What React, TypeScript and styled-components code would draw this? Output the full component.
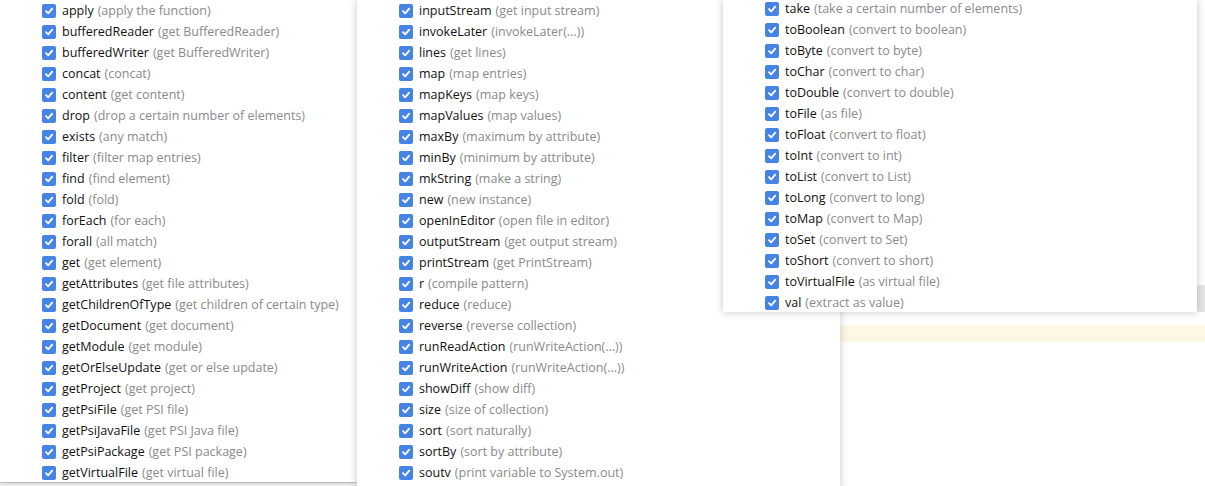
import styled, { createGlobalStyle } from "styled-components";

const GlobalStyle = createGlobalStyle`
  html, body {
    margin: 0;
    padding: 0;
    background: #ffffff;
    overflow: hidden;
  }
  body {
    font-family: "Open Sans", "Noto Sans", sans-serif;
  }
`;

type Item = [string, string];

const left: Item[] = [
  ["apply", "apply the function"],
  ["bufferedReader", "get BufferedReader"],
  ["bufferedWriter", "get BufferedWriter"],
  ["concat", "concat"],
  ["content", "get content"],
  ["drop", "drop a certain number of elements"],
  ["exists", "any match"],
  ["filter", "filter map entries"],
  ["find", "find element"],
  ["fold", "fold"],
  ["forEach", "for each"],
  ["forall", "all match"],
  ["get", "get element"],
  ["getAttributes", "get file attributes"],
  ["getChildrenOfType", "get children of certain type"],
  ["getDocument", "get document"],
  ["getModule", "get module"],
  ["getOrElseUpdate", "get or else update"],
  ["getProject", "get project"],
  ["getPsiFile", "get PSI file"],
  ["getPsiJavaFile", "get PSI Java file"],
  ["getPsiPackage", "get PSI package"],
  ["getVirtualFile", "get virtual file"],
];

const middle: Item[] = [
  ["inputStream", "get input stream"],
  ["invokeLater", "invokeLater(...)"],
  ["lines", "get lines"],
  ["map", "map entries"],
  ["mapKeys", "map keys"],
  ["mapValues", "map values"],
  ["maxBy", "maximum by attribute"],
  ["minBy", "minimum by attribute"],
  ["mkString", "make a string"],
  ["new", "new instance"],
  ["openInEditor", "open file in editor"],
  ["outputStream", "get output stream"],
  ["printStream", "get PrintStream"],
  ["r", "compile pattern"],
  ["reduce", "reduce"],
  ["reverse", "reverse collection"],
  ["runReadAction", "runWriteAction(...)"],
  ["runWriteAction", "runWriteAction(...)"],
  ["showDiff", "show diff"],
  ["size", "size of collection"],
  ["sort", "sort naturally"],
  ["sortBy", "sort by attribute"],
  ["soutv", "print variable to System.out"],
];

const right: Item[] = [
  ["take", "take a certain number of elements"],
  ["toBoolean", "convert to boolean"],
  ["toByte", "convert to byte"],
  ["toChar", "convert to char"],
  ["toDouble", "convert to double"],
  ["toFile", "as file"],
  ["toFloat", "convert to float"],
  ["toInt", "convert to int"],
  ["toList", "convert to List"],
  ["toLong", "convert to long"],
  ["toMap", "convert to Map"],
  ["toSet", "convert to Set"],
  ["toShort", "convert to short"],
  ["toVirtualFile", "as virtual file"],
  ["val", "extract as value"],
];

const Screen = styled.div`
  position: relative;
  width: 1205px;
  height: 486px;
  overflow: hidden;
  background: #ffffff;
`;

// editor behind the popups, only the caret line shows
const Editor = styled.div`
  display: flex;
  flex-direction: column;
  height: 100%;
  padding-top: 325px;
  box-sizing: border-box;
`;

const CaretLine = styled.div`
  height: 17px;
  background: #fdf8e6;
`;

const ScrollThumb = styled.div`
  position: absolute;
  right: 0;
  top: 285px;
  width: 8px;
  height: 27px;
  background: #e6e6e6;
`;

const StatusEdge = styled.div`
  position: absolute;
  left: 0;
  bottom: 0;
  width: 360px;
  height: 3px;
  border-top: 1px solid #cfcfcf;
  background: #f4f4f4;
`;

const Popup = styled.div<{ $left: number; $width: number; $height: number }>`
  position: absolute;
  top: 0;
  left: ${(p) => p.$left}px;
  width: ${(p) => p.$width}px;
  height: ${(p) => p.$height}px;
  background: #ffffff;
  box-shadow: 0 0 8px rgba(0, 0, 0, 0.22);
  overflow: hidden;
  padding-left: 42px;
  box-sizing: border-box;
`;

const ListBody = styled.div<{ $shift: number }>`
  display: flex;
  flex-direction: column;
  margin-top: ${(p) => p.$shift}px;
`;

const Row = styled.div`
  display: flex;
  align-items: center;
  height: 21px;
  flex-shrink: 0;
  white-space: nowrap;
  font-size: 12.5px;
`;

const Box = styled.span`
  width: 14px;
  height: 14px;
  border-radius: 2px;
  background: #4584e4;
  display: flex;
  align-items: center;
  justify-content: center;
  margin-right: 6px;
  flex-shrink: 0;
`;

const Name = styled.span`
  color: #111111;
`;

const Hint = styled.span`
  color: #8a8a8a;
  margin-left: 4px;
`;

const Check = () => (
  <Box>
    <svg width="10" height="10" viewBox="0 0 10 10">
      <path d="M2 5.2 L4.2 7.4 L8.2 2.6" fill="none" stroke="#ffffff" strokeWidth="1.8" strokeLinecap="round" strokeLinejoin="round" />
    </svg>
  </Box>
);

const List = ({ items, shift = 0 }: { items: Item[]; shift?: number }) => (
  <ListBody $shift={shift}>
    {items.map(([name, hint]) => (
      <Row key={name}>
        <Check />
        <Name>{name}</Name>
        <Hint>({hint})</Hint>
      </Row>
    ))}
  </ListBody>
);

export default function App() {
  return (
    <Screen>
      <GlobalStyle />
      <Editor>
        <CaretLine />
      </Editor>
      <ScrollThumb />
      <StatusEdge />
      <Popup $left={0} $width={357} $height={482}>
        <List items={left} />
      </Popup>
      <Popup $left={357} $width={483} $height={490}>
        <List items={middle} />
      </Popup>
      <Popup $left={723} $width={474} $height={312}>
        <List items={right} shift={-2} />
      </Popup>
    </Screen>
  );
}
